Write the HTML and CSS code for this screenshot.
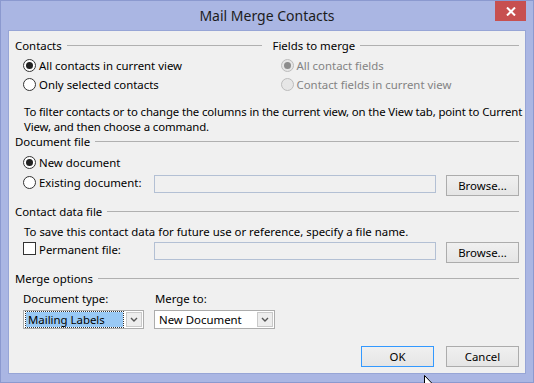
FILE: index.html
```html
<!DOCTYPE html>
<html lang="en">
  <head>
    <meta charset="utf-8" />
    <title>Mail Merge Contacts</title>
    <link rel="stylesheet" href="styles.css">
  </head>
  <body>
    <div class="window">
      <div class="titlebar">
        <span class="title">Mail Merge Contacts</span>
        <button class="close" aria-label="Close">
          <svg width="10" height="9" viewBox="0 0 10 9">
            <path d="M1 0.5 L9 8.5 M9 0.5 L1 8.5" stroke="#fff" stroke-width="2" />
          </svg>
        </button>
      </div>

      <div class="client">
        <div class="cols">
          <div class="col">
            <div class="group-head">Contacts</div>
            <div class="options">
              <div class="opt"><span class="radio checked"></span>All contacts in current view</div>
              <div class="opt"><span class="radio"></span>Only selected contacts</div>
            </div>
          </div>
          <div class="col">
            <div class="group-head">Fields to merge</div>
            <div class="options disabled">
              <div class="opt"><span class="radio checked"></span>All contact fields</div>
              <div class="opt"><span class="radio"></span>Contact fields in current view</div>
            </div>
          </div>
        </div>

        <p class="note note-filter">To filter contacts or to change the columns in the current view, on the View tab, point to Current<br />View, and then choose a command.</p>

        <div class="group-head">Document file</div>
        <div class="opt opt-new"><span class="radio checked"></span>New document</div>
        <div class="file-row file-row-doc">
          <div class="opt file-label"><span class="radio"></span>Existing document:</div>
          <div class="textbox"></div>
          <button class="btn">Browse...</button>
        </div>

        <div class="group-head head-data">Contact data file</div>
        <p class="note note-save">To save this contact data for future use or reference, specify a file name.</p>
        <div class="file-row file-row-perm">
          <div class="opt file-label"><span class="checkbox"></span>Permanent file:</div>
          <div class="textbox"></div>
          <button class="btn">Browse...</button>
        </div>

        <div class="group-head head-merge">Merge options</div>
        <div class="combo-labels">
          <span class="combo-label">Document type:</span>
          <span class="combo-label">Merge to:</span>
        </div>
        <div class="combos">
          <div class="combo">
            <span class="combo-text selected">Mailing Labels</span>
            <span class="combo-drop">
              <svg width="8" height="5" viewBox="0 0 8 5"><path d="M1 1 L4 4 L7 1" fill="none" stroke="#555" stroke-width="1.4" /></svg>
            </span>
          </div>
          <div class="combo">
            <span class="combo-text">New Document</span>
            <span class="combo-drop">
              <svg width="8" height="5" viewBox="0 0 8 5"><path d="M1 1 L4 4 L7 1" fill="none" stroke="#555" stroke-width="1.4" /></svg>
            </span>
          </div>
        </div>

        <div class="actions">
          <button class="btn btn-default">OK</button>
          <button class="btn">Cancel</button>
        </div>
      </div>
    </div>

    <svg class="cursor" width="13" height="20" viewBox="0 0 13 20">
      <path d="M0.5 0.5 L0.5 16.5 L4.2 12.8 L6.6 18.5 L9 17.5 L6.7 12 L11.5 12 Z" fill="#fff" stroke="#000" stroke-width="1" />
    </svg>
  </body>
</html>
```

FILE: styles.css
```css
* {
  margin: 0;
  padding: 0;
  box-sizing: border-box;
}
body {
  position: relative;
  width: 534px;
  height: 383px;
  overflow: hidden;
  background: #fff;
  font: 11.4px/15px "Noto Sans", "Open Sans", sans-serif;
  color: #000;
}
.window {
  height: 383px;
  display: flex;
  flex-direction: column;
  background: #aab6e3;
  border: 1px solid #8b99cf;
  padding: 0 7px 8px;
}
.titlebar {
  position: relative;
  height: 29px;
  display: flex;
  align-items: center;
  justify-content: center;
  padding-bottom: 1px;
}
.title {
  font-size: 14px;
  color: #1c1c1c;
}
.close {
  position: absolute;
  top: 0;
  right: 0;
  width: 31px;
  height: 20px;
  border: none;
  background: #c75050;
  display: flex;
  align-items: center;
  justify-content: center;
}

.client {
  flex: 1;
  display: flex;
  flex-direction: column;
  background: #f0f0f0;
  border: 1px solid #97a5d6;
  padding: 7px 6px 6px;
}
.cols {
  display: grid;
  grid-template-columns: 1fr 1fr;
  column-gap: 11px;
}
.group-head {
  display: flex;
  align-items: center;
  height: 15px;
  white-space: nowrap;
}
.group-head::after {
  content: "";
  flex: 1;
  border-top: 1px solid #b0b0b0;
  margin-left: 5px;
}
.options {
  margin-top: 3px;
}
.opt {
  display: flex;
  align-items: center;
  height: 19px;
  padding-left: 8px;
  white-space: nowrap;
}
.options.disabled {
  color: #838383;
}
.radio,
.checkbox {
  position: relative;
  flex: none;
  width: 13px;
  height: 13px;
  margin-right: 3px;
  background: #fff;
  border: 1px solid #333;
}
.radio {
  border-radius: 50%;
}
.radio.checked::after {
  content: "";
  position: absolute;
  inset: 2px;
  border-radius: 50%;
  background: #222;
}
.disabled .radio {
  border-color: #bcbcbc;
  background: #e6e6e6;
}
.disabled .radio.checked::after {
  background: #8c8c8c;
}

.note {
  padding-left: 9px;
  white-space: nowrap;
}
.note-filter {
  margin-top: 10px;
  letter-spacing: -0.13px;
}
.opt-new {
  margin-top: 6px;
  height: 15px;
}
.file-row {
  display: flex;
  align-items: flex-start;
  height: 21px;
}
.file-row-doc {
  margin-top: 5px;
}
.file-label {
  width: 139px;
  height: 15px;
}
.file-row-perm .file-label {
  align-items: flex-start;
}
.textbox {
  width: 282px;
  height: 18px;
  background: #f0f0f0;
  border: 1px solid #b3c0d4;
}
.btn {
  width: 73px;
  height: 21px;
  margin-left: 10px;
  font: inherit;
  color: #000;
  background: linear-gradient(#f0f0f0, #e5e5e5);
  border: 1px solid #acacac;
}
.head-data {
  margin-top: 8px;
}
.note-save {
  margin-top: 5px;
}
.file-row-perm {
  margin-top: 3px;
}
.head-merge {
  margin-top: 8px;
}
.combo-labels {
  display: flex;
  margin-top: 5px;
  padding-left: 8px;
}
.combo-label {
  width: 132px;
}
.combos {
  display: flex;
  gap: 10px;
  margin-top: 4px;
  padding-left: 8px;
}
.combo {
  width: 121px;
  height: 19px;
  display: flex;
  align-items: center;
  background: #fff;
  border: 1px solid #acacac;
  padding: 1px;
}
.combo-text {
  flex: 1;
  height: 15px;
  padding-left: 3px;
  white-space: nowrap;
}
.combo-text.selected {
  margin: 0 1px;
  padding-left: 2px;
  background: #99c9f5;
  outline: 1px dotted #333;
}
.combo-drop {
  width: 16px;
  height: 15px;
  margin-left: 2px;
  display: flex;
  align-items: center;
  justify-content: center;
  background: #ededed;
  border: 1px solid #c9c9c9;
}
.actions {
  display: flex;
  justify-content: flex-end;
  gap: 2px;
  margin-top: 17px;
}
.btn-default {
  border-color: #3399ff;
}

.cursor {
  position: absolute;
  left: 424px;
  top: 375px;
}
```
